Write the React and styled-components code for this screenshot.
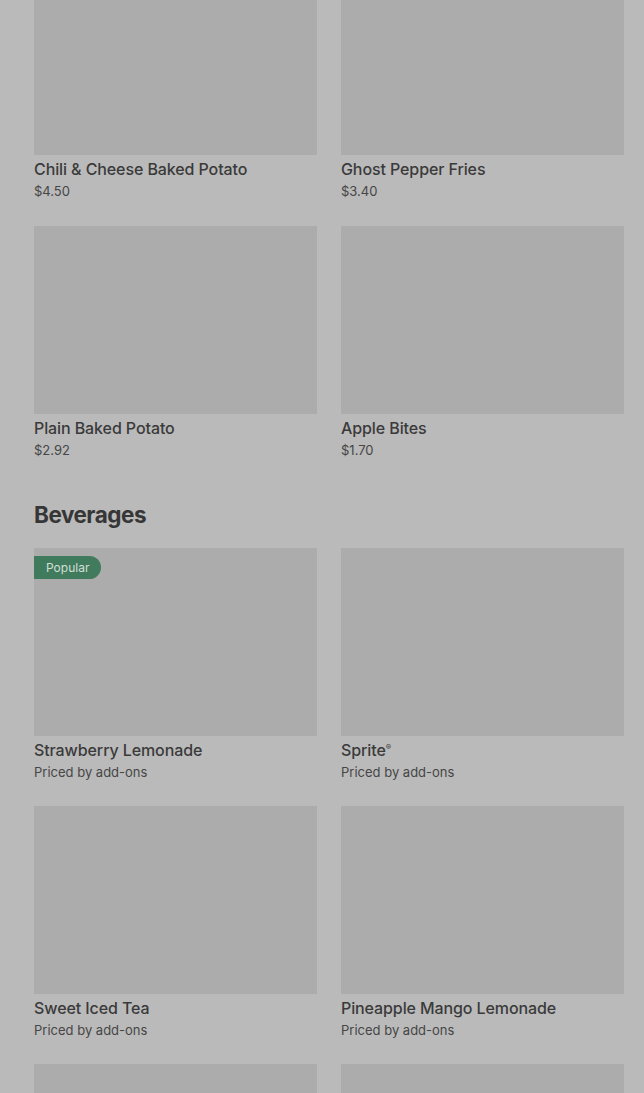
import React from 'react';
import styled, { createGlobalStyle } from 'styled-components';

const GlobalStyle = createGlobalStyle`
  html, body {
    margin: 0;
    padding: 0;
    background: #bababa;
    overflow: hidden;
  }
  body {
    font-family: Inter, "Noto Sans", "Liberation Sans", sans-serif;
    color: #3b3b3b;
  }
`;

const Page = styled.div`
  height: 1093px;
  overflow: hidden;
`;

const Content = styled.main`
  margin-top: -33px;
  padding: 0 20px 0 34px;
`;

const Section = styled.section`
  & + & {
    margin-top: 40px;
  }
`;

const Heading = styled.h2`
  margin: 0 0 17px;
  font-size: 22.5px;
  line-height: 32px;
  font-weight: 700;
  letter-spacing: -0.5px;
  color: #363636;
`;

const Grid = styled.div`
  display: grid;
  grid-template-columns: 283px 283px;
  column-gap: 24px;
  row-gap: ${(p) => p.$rowGap || 26}px;
`;

const Card = styled.div`
  display: flex;
  flex-direction: column;
`;

const Photo = styled.div`
  position: relative;
  height: 188px;
  background: #acacac;
`;

const Badge = styled.span`
  position: absolute;
  top: 8px;
  left: 0;
  height: 23px;
  padding: 0 12px;
  display: flex;
  align-items: center;
  border-radius: 0 12px 12px 0;
  background: #3f7b5c;
  color: #d4dfd8;
  font-size: 12px;
`;

const Title = styled.div`
  margin-top: 4px;
  font-size: 16px;
  line-height: 20px;
  font-weight: 500;
  color: #3a3a3a;
  letter-spacing: -0.1px;
`;

const Price = styled.div`
  margin-top: 3px;
  font-size: 13px;
  line-height: 18px;
  color: #464646;
`;

const Sup = styled.sup`
  font-size: 8px;
  vertical-align: 6px;
  line-height: 0;
`;

const sides = [
  { name: 'Chili & Cheese Baked Potato', price: '$4.50' },
  { name: 'Ghost Pepper Fries', price: '$3.40' },
  { name: 'Plain Baked Potato', price: '$2.92' },
  { name: 'Apple Bites', price: '$1.70' },
];

const beverages = [
  { name: 'Strawberry Lemonade', price: 'Priced by add-ons', popular: true },
  { name: 'Sprite', reg: true, price: 'Priced by add-ons' },
  { name: 'Sweet Iced Tea', price: 'Priced by add-ons' },
  { name: 'Pineapple Mango Lemonade', price: 'Priced by add-ons' },
  { name: '', price: '' },
  { name: '', price: '' },
];

const Item = ({ item }) => (
  <Card>
    <Photo>{item.popular && <Badge>Popular</Badge>}</Photo>
    <Title>
      {item.name}
      {item.reg && <Sup>®</Sup>}
    </Title>
    <Price>{item.price}</Price>
  </Card>
);

export default function App() {
  return (
    <Page>
      <GlobalStyle />
      <Content>
        <Section>
          <Grid>
            {sides.map((it, i) => (
              <Item key={i} item={it} />
            ))}
          </Grid>
        </Section>
        <Section>
          <Heading>Beverages</Heading>
          <Grid $rowGap={25}>
            {beverages.map((it, i) => (
              <Item key={i} item={it} />
            ))}
          </Grid>
        </Section>
      </Content>
    </Page>
  );
}
